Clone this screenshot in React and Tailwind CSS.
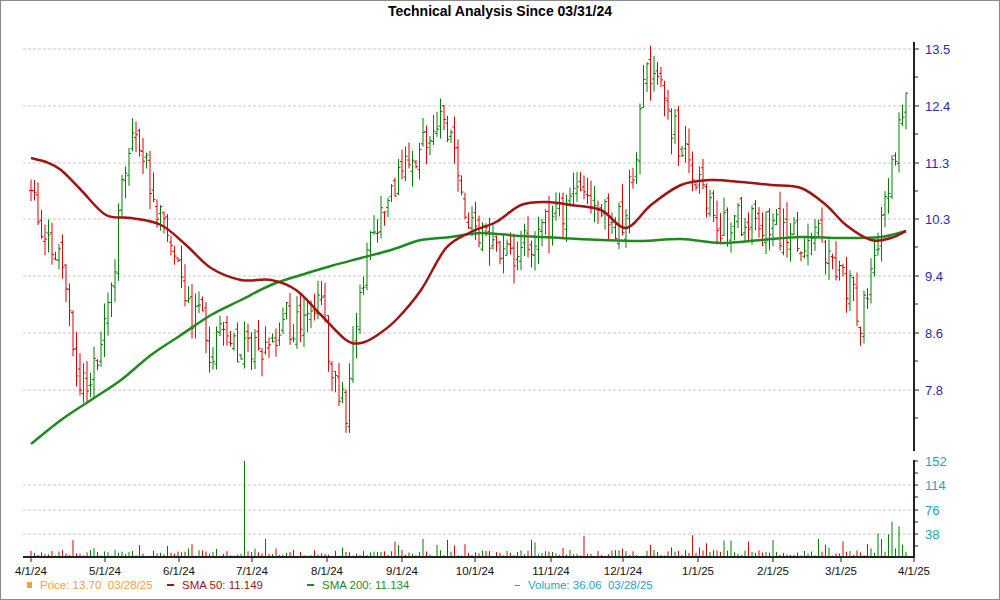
import React from "react";

const FONT = { fontFamily: '"Liberation Sans", Arial, sans-serif' };

function rng(seed) {
  let a = seed;
  return () => {
    a |= 0;
    a = (a + 0x6d2b79f5) | 0;
    let t = Math.imul(a ^ (a >>> 15), 1 | a);
    t = (t + Math.imul(t ^ (t >>> 7), 61 | t)) ^ t;
    return ((t ^ (t >>> 14)) >>> 0) / 4294967296;
  };
}

const closeKeys = [
  [30, 190], [40, 240], [60, 250], [70, 330], [78, 390], [90, 385], [100, 340], [110, 290],
  [120, 200], [135, 130], [150, 180], [160, 220], [175, 260], [185, 310], [200, 320], [210, 350],
  [225, 330], [240, 360], [255, 340], [270, 360], [285, 320], [300, 330], [320, 300], [335, 390],
  [345, 410], [355, 330], [370, 240], [390, 190], [410, 160], [425, 130], [440, 120], [455, 150],
  [465, 220], [480, 240], [500, 245], [520, 250], [540, 230], [560, 210], [580, 190], [600, 215],
  [620, 225], [630, 180], [645, 80], [660, 90], [670, 120], [685, 160], [700, 190], [715, 230],
  [730, 225], [750, 215], [765, 225], [780, 230], [795, 235], [810, 235], [830, 250], [850, 290],
  [860, 320], [870, 270], [880, 230], [890, 180], [900, 120], [906, 105],
];

const sma50 = [[30,158],[45,162],[60,170],[80,190],[105,215],[130,218],[160,225],[185,245],[210,268],[240,280],[270,280],[295,290],[320,315],[345,340],[360,343],[375,336],[395,320],[420,290],[445,248],[470,232],[495,222],[520,205],[545,202],[570,205],[600,210],[625,228],[650,205],[680,185],[710,180],[740,182],[770,185],[800,188],[825,205],[845,225],[870,240],[890,238],[905,231]];
const sma200 = [[30,444],[60,420],[90,400],[120,380],[150,355],[180,335],[210,315],[240,300],[270,285],[300,275],[330,266],[360,258],[390,250],[420,240],[450,237],[480,233],[520,236],[560,238],[600,240],[640,241],[680,239],[720,243],[760,240],[800,237],[840,238],[880,237],[905,231]];

function smooth(p) {
  let d = `M${p[0][0]},${p[0][1]}`;
  for (let i = 0; i < p.length - 1; i++) {
    const p0 = p[i - 1] || p[i];
    const p1 = p[i];
    const p2 = p[i + 1];
    const p3 = p[i + 2] || p2;
    const c1 = [p1[0] + (p2[0] - p0[0]) / 6, p1[1] + (p2[1] - p0[1]) / 6];
    const c2 = [p2[0] - (p3[0] - p1[0]) / 6, p2[1] - (p3[1] - p1[1]) / 6];
    d += ` C${c1[0]},${c1[1]} ${c2[0]},${c2[1]} ${p2[0]},${p2[1]}`;
  }
  return d;
}

function interp(x) {
  for (let i = 0; i < closeKeys.length - 1; i++) {
    const [x0, y0] = closeKeys[i];
    const [x1, y1] = closeKeys[i + 1];
    if (x >= x0 && x <= x1) return y0 + ((y1 - y0) * (x - x0)) / (x1 - x0);
  }
  return closeKeys[closeKeys.length - 1][1];
}

const r = rng(11);
const bars = [];
let prev = interp(30);
for (let x = 30; x <= 906; x += 3.5) {
  const close = interp(x) + (r() - 0.5) * 36;
  const open = prev + (r() - 0.5) * 14;
  const high = Math.min(open, close) - r() * 18;
  const low = Math.max(open, close) + r() * 18;
  const up = close < prev;
  let vol = 1 + r() * 6;
  if (r() > 0.85) vol += r() * 16;
  if (x > 860 && r() > 0.5) vol += r() * 40;
  if (Math.abs(x - 243) < 1.8) vol = 96;
  bars.push({ x, open, close, high, low, up, vol });
  prev = close;
}

const priceTicks = [[49, "13.5"], [106, "12.4"], [163, "11.3"], [219, "10.3"], [276, "9.4"], [333, "8.6"], [390, "7.8"]];
const volTicks = [[461, "152"], [485, "114"], [510, "76"], [534, "38"]];
const dates = [[30, "4/1/24"], [104, "5/1/24"], [178, "6/1/24"], [251, "7/1/24"], [326, "8/1/24"], [401, "9/1/24"], [474, "10/1/24"], [550, "11/1/24"], [622, "12/1/24"], [697, "1/1/25"], [772, "2/1/25"], [840, "3/1/25"], [913, "4/1/25"]];

function Chart() {
  return (
    <svg width="998" height="556" viewBox="0 22 998 556" style={FONT}>
      {priceTicks.map(([y]) => (
        <line key={y} x1="22" x2="913" y1={y} y2={y} stroke="#c8c8c8" strokeDasharray="3 2" />
      ))}
      {volTicks.slice(1).map(([y]) => (
        <line key={y} x1="22" x2="913" y1={y} y2={y} stroke="#c8c8c8" strokeDasharray="3 2" />
      ))}
      {bars.map((b, i) => {
        const c = b.up ? "#008000" : "#e00000";
        return (
          <g key={i} stroke={c} strokeWidth="1">
            <line x1={b.x} x2={b.x} y1={b.high} y2={b.low} />
            <line x1={b.x - 2} x2={b.x} y1={b.open} y2={b.open} />
            <line x1={b.x} x2={b.x + 2} y1={b.close} y2={b.close} />
            <line x1={b.x} x2={b.x} y1={557} y2={557 - b.vol} />
          </g>
        );
      })}
      <path d={smooth(sma200)} fill="none" stroke="#1f8a1f" strokeWidth="2.5" />
      <path d={smooth(sma50)} fill="none" stroke="#a01414" strokeWidth="2.5" />
      <line x1="913" x2="913" y1="42" y2="451" stroke="#222" strokeWidth="2" />
      <line x1="913" x2="913" y1="460" y2="558" stroke="#222" strokeWidth="2" />
      <line x1="22" x2="914" y1="557" y2="557" stroke="#222" strokeWidth="2" />
      {priceTicks.map(([y, t]) => (
        <g key={t}>
          <line x1="913" x2="918" y1={y} y2={y} stroke="#222" />
          <line x1="913" x2="917" y1={y + 28} y2={y + 28} stroke="#222" />
          <text x="924" y={y + 5} fontSize="13" fill="#2a2ab0">{t}</text>
        </g>
      ))}
      {[461, 473, 485, 497, 510, 522, 534, 546].map((y) => (
        <line key={y} x1="913" x2="917" y1={y} y2={y} stroke="#222" />
      ))}
      {volTicks.map(([y, t]) => (
        <text key={t} x="924" y={y + 5} fontSize="13" fill="#20a8c0">{t}</text>
      ))}
      {dates.map(([x, t]) => (
        <g key={t}>
          <line x1={x} x2={x} y1="557" y2="562" stroke="#222" />
          <text x={x} y="575" fontSize="11.5" textAnchor="middle" fill="#111">{t}</text>
        </g>
      ))}
    </svg>
  );
}

export default function App() {
  return (
    <div className="flex h-[600px] w-[1000px] flex-col overflow-hidden border border-[#8a8a8a] bg-white" style={FONT}>
      <div className="h-[21px] pt-[2px] text-center text-[14px] font-bold leading-[17px] text-black">
        Technical Analysis Since 03/31/24
      </div>
      <Chart />
      <div className="flex items-center pl-[26px] text-[11.5px] leading-[14px]">
        <span className="flex w-[140px] items-center gap-[8px] text-[#f4a040]">
          <span className="h-[6px] w-[5px] bg-[#f4a040]" />Price: 13.70&nbsp; 03/28/25
        </span>
        <span className="flex w-[140px] items-center gap-[8px] text-[#a01414]">
          <span className="h-[2px] w-[7px] bg-[#a01414]" />SMA 50: 11.149
        </span>
        <span className="flex w-[208px] items-center gap-[8px] text-[#1f8a1f]">
          <span className="h-[2px] w-[7px] bg-[#1f8a1f]" />SMA 200: 11.134
        </span>
        <span className="flex items-center gap-[8px] text-[#20a8c0]">
          <span className="h-[1px] w-[5px] bg-[#20a8c0]" />Volume: 36.06&nbsp; 03/28/25
        </span>
      </div>
    </div>
  );
}
